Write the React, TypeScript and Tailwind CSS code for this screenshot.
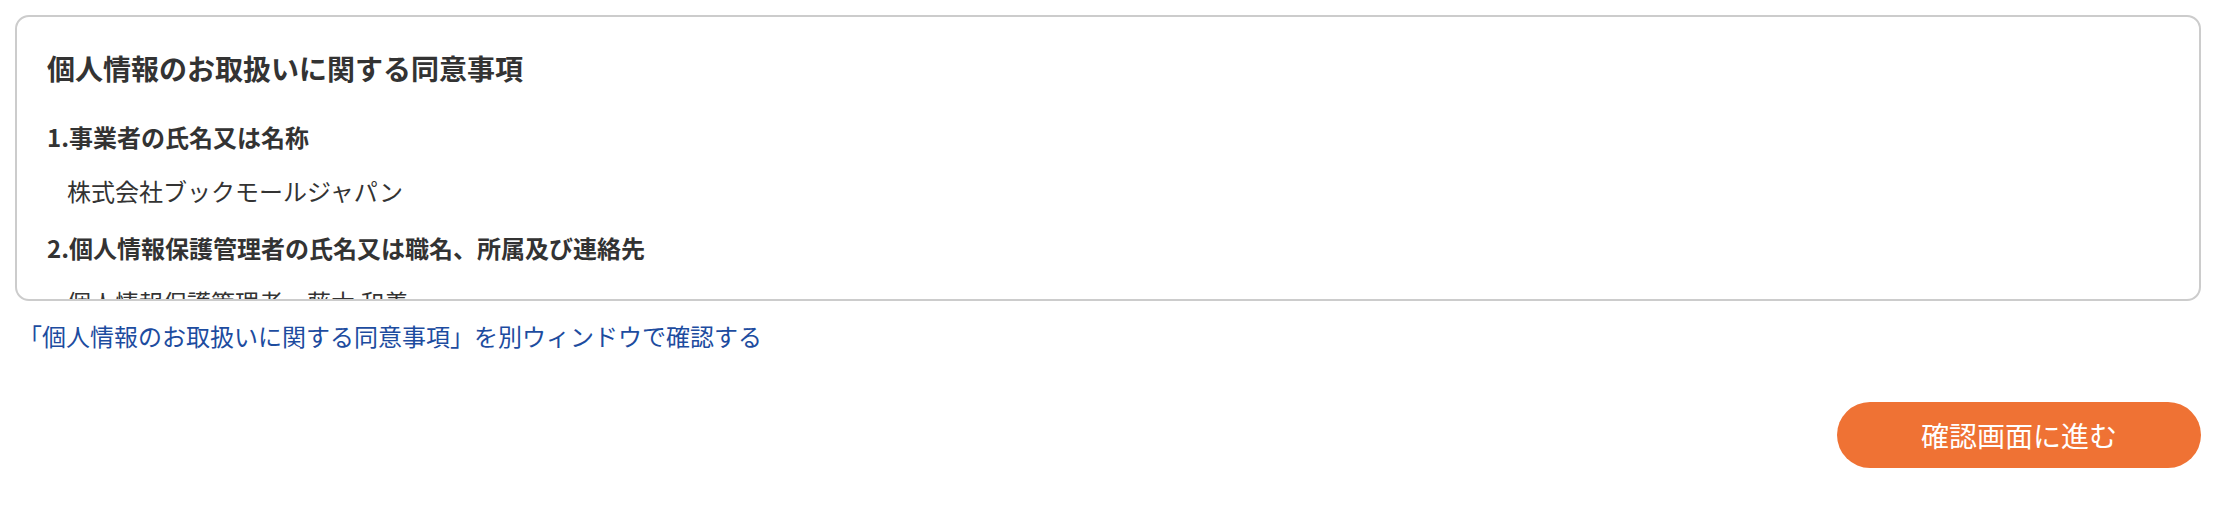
const FONT = "font-['Noto_Sans_CJK_JP','Noto_Sans',sans-serif]"

const App = () => {
  return (
    <div className={`${FONT} bg-white pl-[15px] pr-[19px] pt-[15px] pb-6 text-[#333333]`}>
      {/* Agreement box */}
      <div className="h-[286px] overflow-hidden rounded-[14px] border-2 border-[#cccccc] pl-[30px] pr-8 pt-[30px]">
        <h2 className="mb-[30px] text-[28px] font-bold leading-[42px]">
          個人情報のお取扱いに関する同意事項
        </h2>
        <h3 className="mb-[18px] text-[24px] font-bold leading-[36px]">1.事業者の氏名又は名称</h3>
        <p className="mb-[21px] pl-5 text-[24px] leading-[36px]">株式会社ブックモールジャパン</p>
        <h3 className="mb-[18px] text-[24px] font-bold leading-[36px]">
          2.個人情報保護管理者の氏名又は職名、所属及び連絡先
        </h3>
        <p className="mb-[21px] pl-5 text-[24px] leading-[36px]">個人情報保護管理者　藤木 和義</p>
      </div>

      <p className="mt-[17px] pl-[3px] text-[24px] leading-[36px]">
        <a href="#" className="text-[#1d4c9f]">
          「個人情報のお取扱いに関する同意事項」を別ウィンドウで確認する
        </a>
      </p>

      {/* Submit */}
      <div className="mt-[48px] flex justify-end">
        <button
          type="button"
          className="flex h-[66px] w-[364px] items-center justify-center rounded-full bg-[#ef7234] text-[28px] text-white"
        >
          確認画面に進む
        </button>
      </div>
    </div>
  )
}

export default App
